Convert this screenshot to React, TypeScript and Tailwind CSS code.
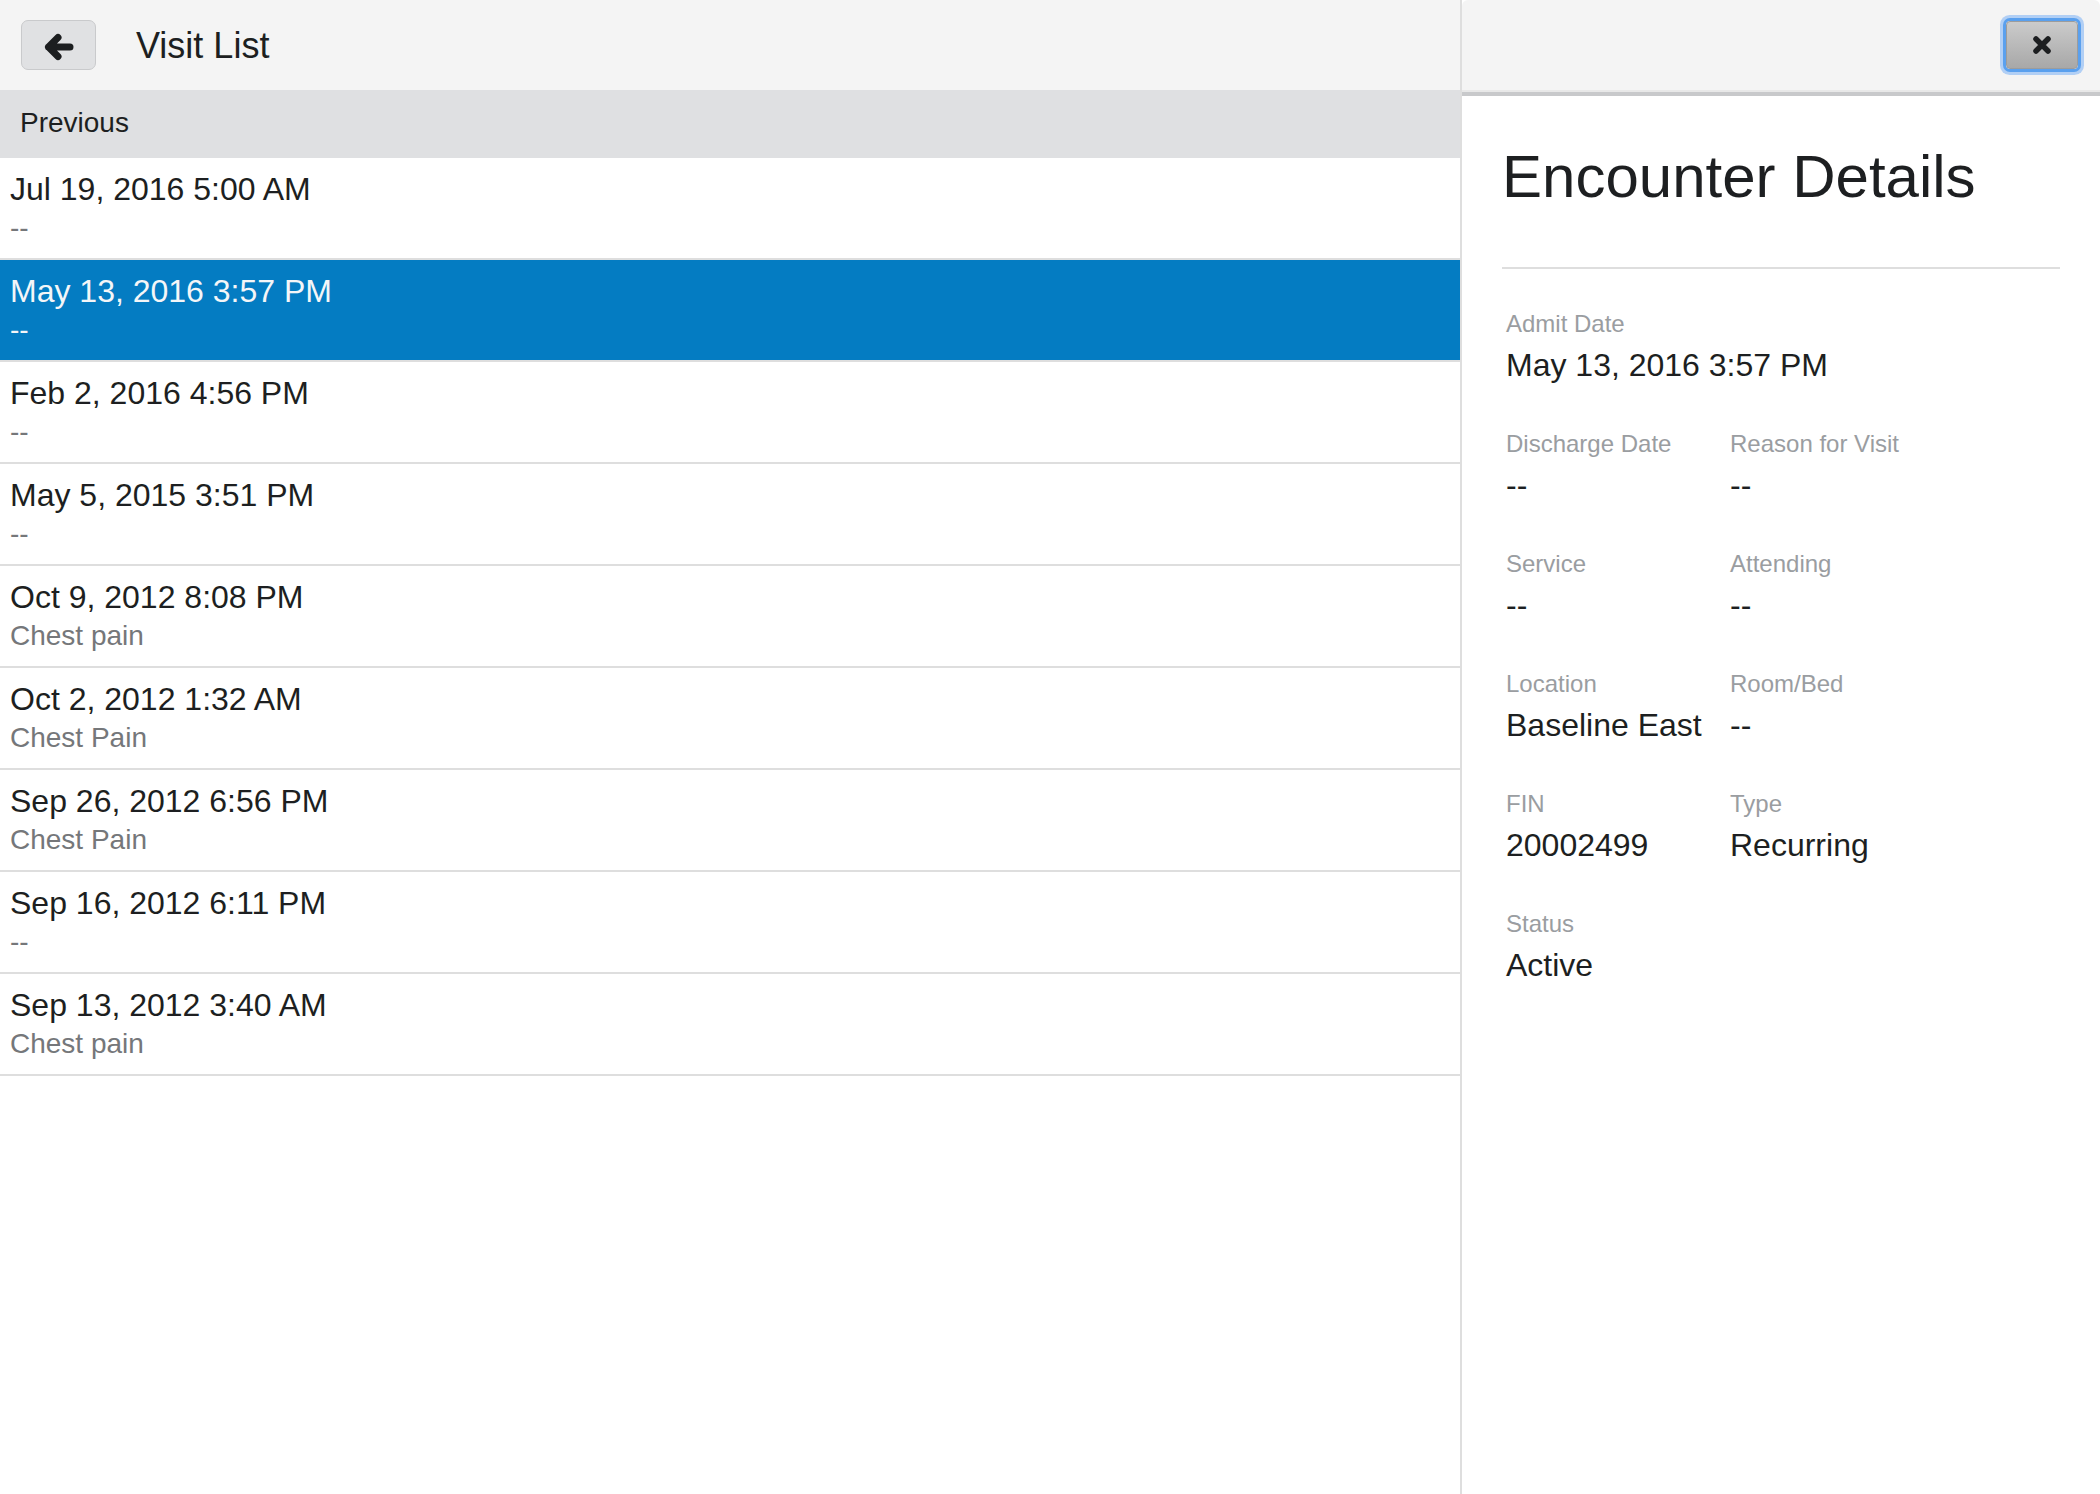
import React from "react";

type Visit = { date: string; reason: string };

const VISITS: Visit[] = [
  { date: "Jul 19, 2016 5:00 AM", reason: "--" },
  { date: "May 13, 2016 3:57 PM", reason: "--" },
  { date: "Feb 2, 2016 4:56 PM", reason: "--" },
  { date: "May 5, 2015 3:51 PM", reason: "--" },
  { date: "Oct 9, 2012 8:08 PM", reason: "Chest pain" },
  { date: "Oct 2, 2012 1:32 AM", reason: "Chest Pain" },
  { date: "Sep 26, 2012 6:56 PM", reason: "Chest Pain" },
  { date: "Sep 16, 2012 6:11 PM", reason: "--" },
  { date: "Sep 13, 2012 3:40 AM", reason: "Chest pain" },
];

const SELECTED = 1;

function Field({ label, value, wide }: { label: string; value: string; wide?: boolean }) {
  return (
    <div className={wide ? "col-span-2" : ""}>
      <div className="text-[24px] leading-[30px] text-[#9a9da1]">{label}</div>
      <div className="mt-[6px] text-[32px] leading-[40px] text-[#1d1f21]">{value}</div>
    </div>
  );
}

export default function App() {
  return (
    <div className="flex h-[1494px] w-full overflow-hidden bg-white font-['Liberation_Sans',Arial,sans-serif] text-[#1d1f21]">
      {/* Left: visit list */}
      <section className="flex w-[1462px] shrink-0 flex-col border-r-2 border-[#dedede]">
        <header className="flex h-[90px] items-center bg-[#f4f4f4]">
          <button
            type="button"
            aria-label="Back"
            className="ml-[21px] grid h-[50px] w-[75px] place-items-center rounded-[7px] border border-[#c9cacc] bg-[#e0e1e3]"
          >
            <svg width="30" height="30" viewBox="0 0 30 30" fill="none" className="mt-[4px]">
              <path
                d="M14 5.5 L4.5 15 L14 24.5 M4.5 15 H26"
                stroke="#1c1e20"
                strokeWidth="7"
                strokeLinecap="round"
                strokeLinejoin="round"
              />
            </svg>
          </button>
          <h1 className="ml-[40px] mt-[1px] text-[36px] leading-[40px] text-[#1d1f21]">Visit List</h1>
        </header>

        <div className="h-[68px] bg-[#dfe0e2] pl-[20px] pt-[16px] text-[28px] leading-[34px] text-[#1d1f21]">
          Previous
        </div>

        <ul>
          {VISITS.map((v, i) => {
            const sel = i === SELECTED;
            return (
              <li
                key={v.date}
                className={
                  sel
                    ? "border-b-2 border-[#dedede] bg-[#047cc2] pb-[10px] pl-[10px] pt-[12px]"
                    : "border-b-2 border-[#dedede] bg-white pb-[10px] pl-[10px] pt-[12px]"
                }
              >
                <div className={sel ? "text-[32px] leading-[38px] text-[#f4f6f8]" : "text-[32px] leading-[38px] text-[#1d1f21]"}>
                  {v.date}
                </div>
                <div className={sel ? "text-[28px] leading-[40px] text-[#f4f6f8]" : "text-[28px] leading-[40px] text-[#75777a]"}>
                  {v.reason}
                </div>
              </li>
            );
          })}
        </ul>
      </section>

      {/* Right: encounter details */}
      <section className="flex min-w-0 flex-1 flex-col">
        <header className="flex h-[90px] items-center justify-end rounded-t-[6px] bg-[#f4f4f4] pr-[22px]">
          <button
            type="button"
            aria-label="Close"
            className="grid h-[48px] w-[72px] place-items-center rounded-[4px] border border-[#9c9c9c] bg-gradient-to-b from-[#cbcbcb] to-[#a8a8a8] shadow-[0_0_0_3px_#5aa0ee,0_0_0_6px_rgba(110,170,245,0.5)]"
          >
            <svg width="20" height="20" viewBox="0 0 20 20" fill="none">
              <path d="M4 4 L16 16 M16 4 L4 16" stroke="#1c1e20" strokeWidth="5.5" strokeLinecap="round" />
            </svg>
          </button>
        </header>
        <div className="h-[2px] bg-[#e8e8e8]" />
        <div className="h-[4px] bg-[#c8c9cb]" />

        <div className="px-[40px] pt-[48px]">
          <h2 className="text-[60px] leading-[66px] text-[#1d1f21]">Encounter Details</h2>
          <div className="mt-[57px] h-[2px] bg-[#dedede]" />

          <div className="grid grid-cols-[224px_1fr] gap-y-[44px] pl-[4px] pt-[40px]">
            <Field label="Admit Date" value="May 13, 2016 3:57 PM" wide />
            <Field label="Discharge Date" value="--" />
            <Field label="Reason for Visit" value="--" />
            <Field label="Service" value="--" />
            <Field label="Attending" value="--" />
            <Field label="Location" value="Baseline East" />
            <Field label="Room/Bed" value="--" />
            <Field label="FIN" value="20002499" />
            <Field label="Type" value="Recurring" />
            <Field label="Status" value="Active" wide />
          </div>
        </div>
      </section>
    </div>
  );
}
